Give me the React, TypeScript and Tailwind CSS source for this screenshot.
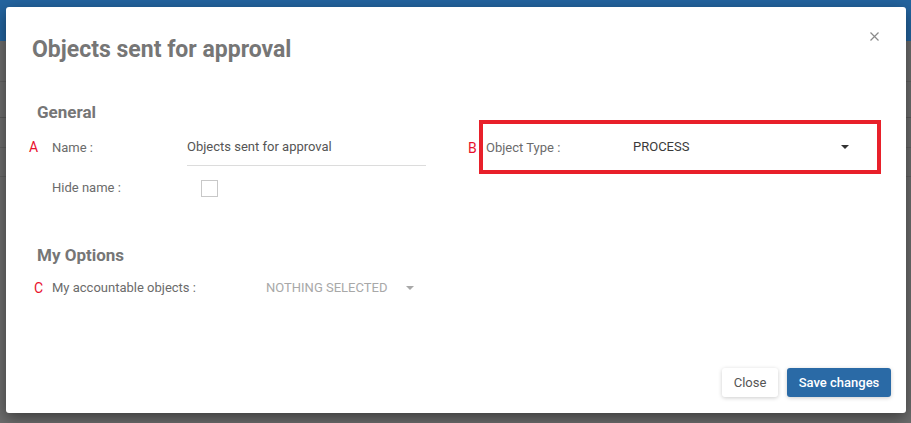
// Modal "Objects sent for approval" over a dimmed page
const font = { fontFamily: 'Roboto, "Noto Sans", Arial, sans-serif' }

function Caret({ className }: { className: string }) {
  return (
    <svg width="8" height="4" viewBox="0 0 8 4" className={className}>
      <path d="M0 0 L8 0 L4 4 Z" fill="currentColor" />
    </svg>
  )
}

export default function App() {
  return (
    <div className="relative h-[423px] w-[911px] overflow-hidden bg-[#6d6d6d]" style={font}>
      {/* page behind the overlay */}
      <div className="h-[41px] bg-[#23649f]" />
      <div className="h-[41px] border-b border-[#616161]" />
      <div className="h-[36px] border-b border-[#5a5a5a]" />
      <div className="h-[30px] border-b border-[#616161]" />
      <div className="h-[29px] border-b border-[#616161]" />

      {/* modal */}
      <div className="absolute left-[6px] top-[7px] flex h-[406px] w-[900px] flex-col rounded-[3px] bg-white shadow-[0_5px_15px_rgba(0,0,0,0.45)]">
        <div className="relative pl-[26px] pt-[29px]">
          <h1 className="text-[23px] font-bold leading-[28px] text-[#767676]">Objects sent for approval</h1>
          <button className="absolute right-[27px] top-[25px] text-[#8a8a8a]">
            <svg width="9" height="9" viewBox="0 0 9 9">
              <path d="M0.5 0.5 L8.5 8.5 M8.5 0.5 L0.5 8.5" stroke="currentColor" strokeWidth="1.2" />
            </svg>
          </button>
        </div>

        <div className="flex flex-1 pl-[23px] pt-[36px]">
          {/* left column */}
          <div className="w-[397px]">
            <h2 className="pl-[8px] text-[17px] font-bold leading-[24px] text-[#767676]">General</h2>

            <div className="mt-[5px] flex h-[37px] items-center">
              <span className="w-[23px] text-[14px] text-[#e8112d]">A</span>
              <span className="w-[135px] text-[13px] text-[#6b6b6b]">Name :</span>
              <div className="flex h-[37px] w-[239px] items-center border-b border-[#dcdcdc] text-[13px] text-[#555]">
                Objects sent for approval
              </div>
            </div>

            <div className="mt-[7px] flex h-[30px] items-center">
              <span className="w-[23px]" />
              <span className="w-[135px] text-[13px] text-[#6b6b6b]">Hide name :</span>
              <span className="ml-[14px] h-[17px] w-[17px] border border-[#c8c8c8] bg-white" />
            </div>

            <h2 className="mt-[40px] pl-[8px] text-[17px] font-bold leading-[24px] text-[#767676]">My Options</h2>

            <div className="mt-[6px] flex h-[30px] items-center">
              <span className="w-[23px] pl-[5px] text-[14px] text-[#e8112d]">C</span>
              <span className="w-[214px] text-[13px] text-[#6b6b6b]">My accountable objects :</span>
              <span className="text-[13px] text-[#a8a8a8]">NOTHING SELECTED</span>
              <Caret className="ml-[19px] text-[#a8a8a8]" />
            </div>
          </div>

          {/* right column */}
          <div className="ml-[42px] flex items-start pt-[20px]">
            <span className="mt-[20px] w-[11px] text-[14px] leading-[16px] text-[#e8112d]">B</span>
            <div className="flex h-[54px] w-[402px] items-center border-4 border-[#e8202a] pl-[3px] pr-[28px]">
              <span className="w-[147px] pt-[1px] text-[13px] text-[#6b6b6b]">Object Type :</span>
              <span className="flex-1 text-[13px] text-[#3a3a3a]">PROCESS</span>
              <Caret className="text-[#333]" />
            </div>
          </div>
        </div>

        <div className="flex justify-end gap-[9px] pb-[16px] pr-[15px]">
          <button className="h-[29px] w-[56px] rounded-[3px] bg-white text-[13px] text-[#555] shadow-[0_1px_4px_rgba(0,0,0,0.2)]">
            Close
          </button>
          <button className="h-[29px] w-[104px] rounded-[3px] bg-[#2a6aa6] text-[13px] font-medium text-white shadow-[0_1px_4px_rgba(0,0,0,0.2)]">
            Save changes
          </button>
        </div>
      </div>
    </div>
  )
}
